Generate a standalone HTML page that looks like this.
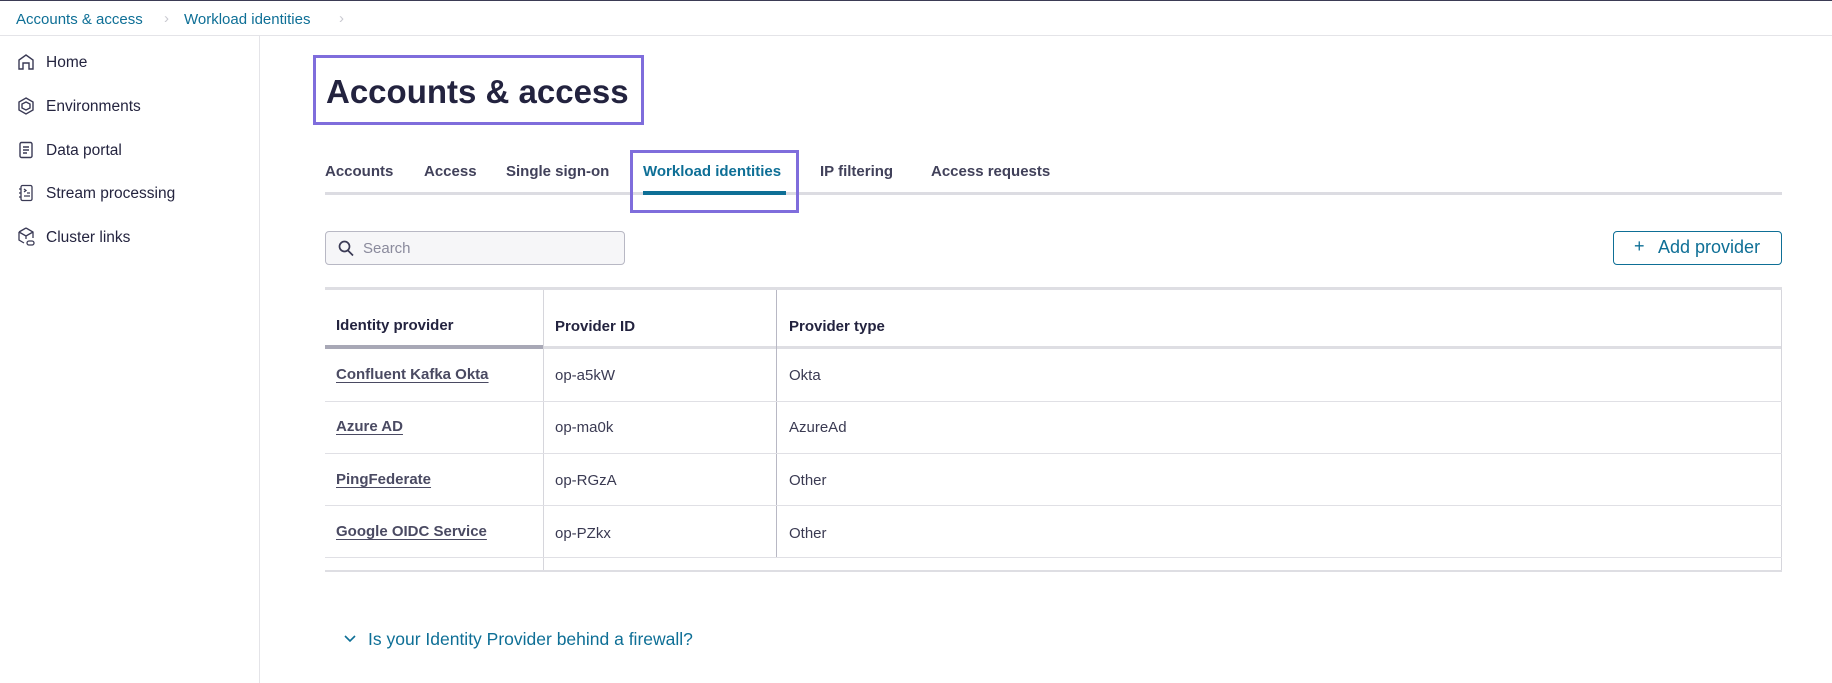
<!DOCTYPE html>
<html><head><meta charset="utf-8"><style>
*{margin:0;padding:0;box-sizing:border-box}
body{width:1832px;height:683px;background:#fff;font-family:"Liberation Sans",sans-serif;position:relative;overflow:hidden;color:#23233f}
.a{position:absolute;white-space:nowrap}
.bc{color:#0e6f96;font-size:15px;top:11px}
.nav{left:46px;font-size:15.5px;color:#24243f}
.ic{position:absolute;left:17px}
.tab{top:163px;font-size:15px;font-weight:bold;color:#41415a}
.th{font-size:15px;font-weight:bold;color:#23233f}
.td{font-size:15px;color:#3a3a52}
.lk{font-size:15px;font-weight:bold;color:#4a4a62;text-decoration:underline;text-underline-offset:3px}
.hl{position:absolute;height:1px;background:#e0e0e5}
.vl{position:absolute;width:1px;background:#d6d6dc}
</style></head><body>
<div class="a" style="left:0;top:0;width:1832px;height:1px;background:#3b3b55"></div>
<div class="a bc" style="left:16px">Accounts &amp; access</div>
<div class="a" style="left:164px;top:10px;color:#c9c9d0;font-size:15px">›</div>
<div class="a bc" style="left:184px">Workload identities</div>
<div class="a" style="left:339px;top:10px;color:#c9c9d0;font-size:15px">›</div>
<div class="a" style="left:0;top:35px;width:1832px;height:1px;background:#e4e4e8"></div>
<div class="a" style="left:259px;top:36px;width:1px;height:647px;background:#e4e4e8"></div>

<svg class="ic" style="top:53px" width="18" height="18" viewBox="0 0 18 18" fill="none" stroke="#3a3a55" stroke-width="1.4"><path d="M2 16V7l7-5 7 5v9h-4v-6H6v6z"/></svg>
<div class="a nav" style="top:54px">Home</div>
<svg class="ic" style="top:97px" width="18" height="18" viewBox="0 0 18 18" fill="none" stroke="#3a3a55" stroke-width="1.4"><path d="M9 1l7 4v8l-7 4-7-4V5z"/><path d="M9 5l4 2v4l-4 2-4-2V7z"/></svg>
<div class="a nav" style="top:98px">Environments</div>
<svg class="ic" style="top:141px" width="18" height="18" viewBox="0 0 18 18" fill="none" stroke="#3a3a55" stroke-width="1.4"><rect x="3" y="1.5" width="12" height="15" rx="1.5"/><path d="M6 6h6M6 9h6M6 12h4"/></svg>
<div class="a nav" style="top:142px">Data portal</div>
<svg class="ic" style="top:184px" width="18" height="18" viewBox="0 0 18 18" fill="none" stroke="#3a3a55" stroke-width="1.3"><rect x="4" y="1.5" width="11" height="15" rx="1.5"/><path d="M2 5h2M2 9h2M2 13h2M7 5l2 1.5L7 8M10 9h3M7 12h6"/></svg>
<div class="a nav" style="top:185px">Stream processing</div>
<svg class="ic" style="top:227px" width="18" height="20" viewBox="0 0 18 20" fill="none" stroke="#3a3a55" stroke-width="1.3"><path d="M9 1l7 4v6M2 5l7-4M2 5v8l5 3M2 5l7 4 7-4M9 9v3"/><rect x="10" y="14" width="7" height="4" rx="2"/></svg>
<div class="a nav" style="top:229px">Cluster links</div>

<div class="a" style="left:313px;top:55px;width:331px;height:70px;border:3px solid #7f6ddc"></div>
<div class="a" style="left:326px;top:73px;font-size:33px;font-weight:bold;color:#23233f">Accounts &amp; access</div>

<div class="a tab" style="left:325px">Accounts</div>
<div class="a tab" style="left:424px">Access</div>
<div class="a tab" style="left:506px">Single sign-on</div>
<div class="a tab" style="left:643px;color:#0e6f96">Workload identities</div>
<div class="a tab" style="left:820px">IP filtering</div>
<div class="a tab" style="left:931px">Access requests</div>
<div class="a" style="left:325px;top:192px;width:1457px;height:3px;background:#dcdce2"></div>
<div class="a" style="left:643px;top:191px;width:143px;height:4px;background:#0e6f96"></div>
<div class="a" style="left:630px;top:150px;width:169px;height:63px;border:3px solid #7f6ddc"></div>

<div class="a" style="left:325px;top:231px;width:300px;height:34px;background:#f6f6f8;border:1px solid #b8b8c4;border-radius:4px"></div>
<svg class="a" style="left:338px;top:240px" width="16" height="17" viewBox="0 0 16 17" fill="none" stroke="#3a3a55" stroke-width="1.7"><circle cx="6.5" cy="6.5" r="5"/><path d="M10 10.5l5 5"/></svg>
<div class="a" style="left:363px;top:240px;font-size:15px;color:#8a8a9c">Search</div>

<div class="a" style="left:1613px;top:231px;width:169px;height:34px;border:1px solid #0e6f96;border-radius:4px"></div>
<div class="a" style="left:1634px;top:236px;font-size:18px;color:#0e6f96">+</div>
<div class="a" style="left:1658px;top:237px;font-size:18px;color:#0e6f96">Add provider</div>

<div class="a" style="left:325px;top:287px;width:1457px;height:3px;background:#dedee3"></div>
<div class="a" style="left:325px;top:346px;width:1457px;height:3px;background:#dedee3"></div>
<div class="a" style="left:325px;top:345px;width:218px;height:4px;background:#a8a8b6"></div>
<div class="vl" style="left:543px;top:290px;height:281px"></div>
<div class="vl" style="left:776px;top:290px;height:267px;background:#b8b8c4"></div>
<div class="vl" style="left:1781px;top:290px;height:281px"></div>
<div class="hl" style="left:325px;top:401px;width:1457px"></div>
<div class="hl" style="left:325px;top:453px;width:1457px"></div>
<div class="hl" style="left:325px;top:505px;width:1457px"></div>
<div class="hl" style="left:325px;top:557px;width:1457px"></div>
<div class="a" style="left:325px;top:570px;width:1457px;height:2px;background:#dedee3"></div>

<div class="a th" style="left:336px;top:317px">Identity provider</div>
<div class="a th" style="left:555px;top:318px">Provider ID</div>
<div class="a th" style="left:789px;top:318px">Provider type</div>

<div class="a lk" style="left:336px;top:366px">Confluent Kafka Okta</div>
<div class="a td" style="left:555px;top:367px">op-a5kW</div>
<div class="a td" style="left:789px;top:367px">Okta</div>
<div class="a lk" style="left:336px;top:418px">Azure AD</div>
<div class="a td" style="left:555px;top:419px">op-ma0k</div>
<div class="a td" style="left:789px;top:419px">AzureAd</div>
<div class="a lk" style="left:336px;top:471px">PingFederate</div>
<div class="a td" style="left:555px;top:472px">op-RGzA</div>
<div class="a td" style="left:789px;top:472px">Other</div>
<div class="a lk" style="left:336px;top:523px">Google OIDC Service</div>
<div class="a td" style="left:555px;top:525px">op-PZkx</div>
<div class="a td" style="left:789px;top:525px">Other</div>

<svg class="a" style="left:343px;top:634px" width="14" height="10" viewBox="0 0 14 10" fill="none" stroke="#0e6f96" stroke-width="1.6"><path d="M2 2l5 5 5-5"/></svg>
<div class="a" style="left:368px;top:629px;font-size:17.5px;color:#0e6f96">Is your Identity Provider behind a firewall?</div>
</body></html>
